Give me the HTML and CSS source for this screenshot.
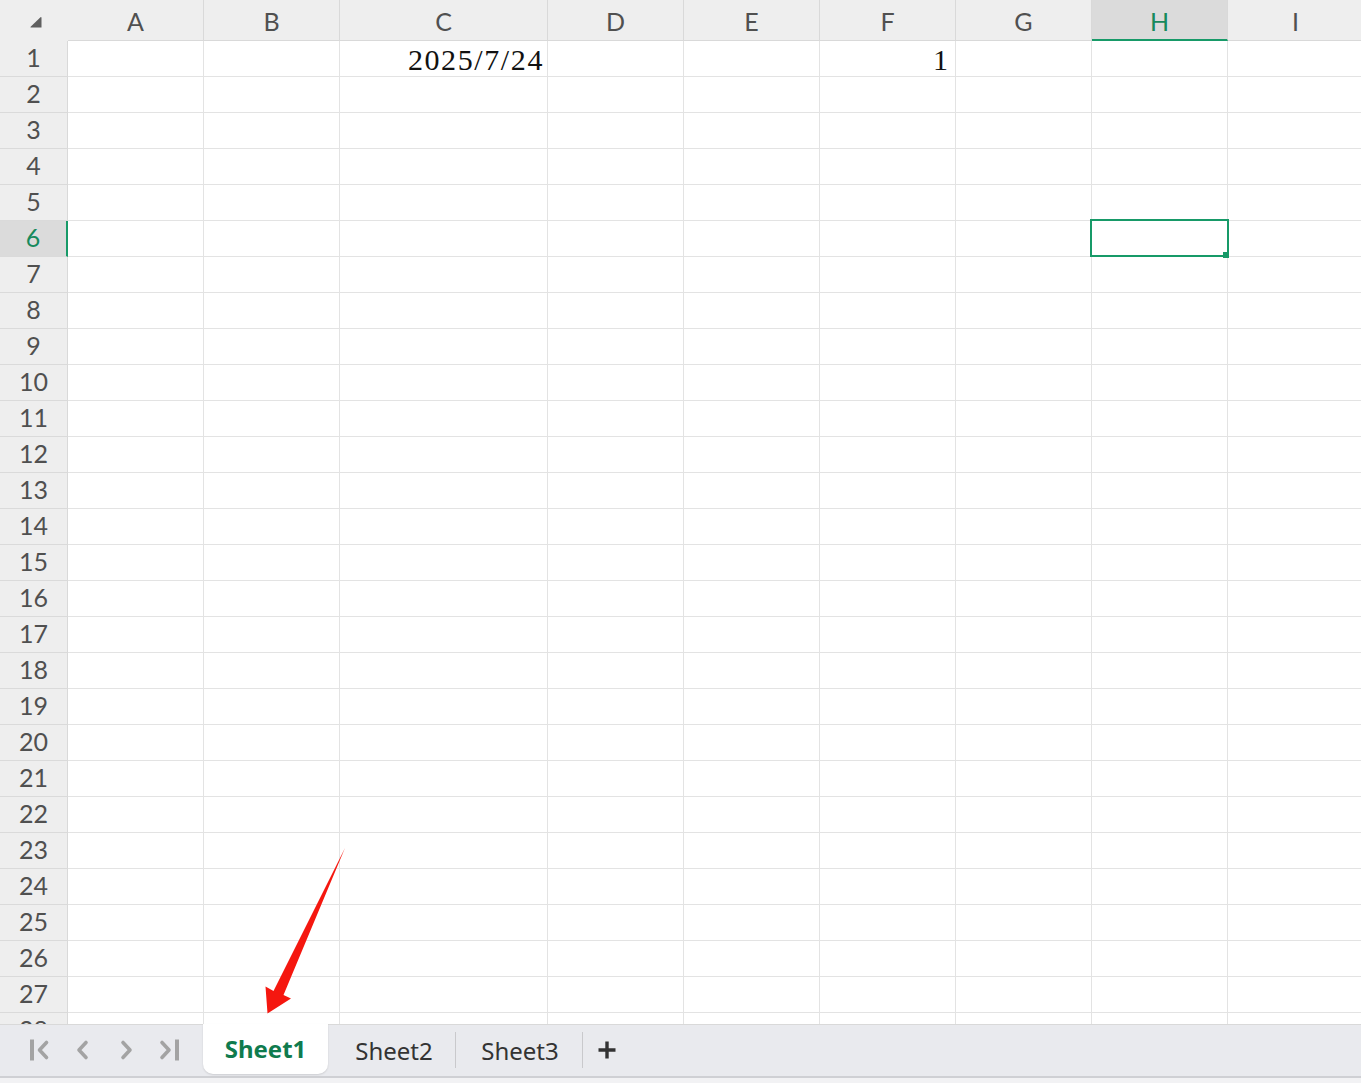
FILE: index.html
```html
<!DOCTYPE html>
<html>
<head>
<meta charset="utf-8">
<link rel="stylesheet" href="styles.css">
</head>
<body>
<div class="app">
  <div class="sheet">
    <div class="row head">
      <div class="corner"><svg width="68" height="40" viewBox="0 0 68 40"><path d="M40.5 17.2 Q41.5 16.8 41.5 18 L41.5 27.5 L31 27.5 Q29.8 27.5 30.6 26.7 Z" fill="#5f5f5f"/></svg></div>
      <div class="ch">A</div><div class="ch">B</div><div class="ch">C</div><div class="ch">D</div><div class="ch">E</div><div class="ch">F</div><div class="ch">G</div><div class="ch on">H</div><div class="ch">I</div>
    </div>
    <div class="row"><div class="rh">1</div><div class="c"></div><div class="c"></div><div class="c v date">2025/7/24</div><div class="c"></div><div class="c"></div><div class="c v num">1</div><div class="c"></div><div class="c"></div><div class="c"></div></div>
    <div class="row"><div class="rh">2</div><div class="c"></div><div class="c"></div><div class="c"></div><div class="c"></div><div class="c"></div><div class="c"></div><div class="c"></div><div class="c"></div><div class="c"></div></div>
    <div class="row"><div class="rh">3</div><div class="c"></div><div class="c"></div><div class="c"></div><div class="c"></div><div class="c"></div><div class="c"></div><div class="c"></div><div class="c"></div><div class="c"></div></div>
    <div class="row"><div class="rh">4</div><div class="c"></div><div class="c"></div><div class="c"></div><div class="c"></div><div class="c"></div><div class="c"></div><div class="c"></div><div class="c"></div><div class="c"></div></div>
    <div class="row"><div class="rh">5</div><div class="c"></div><div class="c"></div><div class="c"></div><div class="c"></div><div class="c"></div><div class="c"></div><div class="c"></div><div class="c"></div><div class="c"></div></div>
    <div class="row"><div class="rh on">6</div><div class="c"></div><div class="c"></div><div class="c"></div><div class="c"></div><div class="c"></div><div class="c"></div><div class="c"></div><div class="c sel"></div><div class="c"></div></div>
    <div class="row"><div class="rh">7</div><div class="c"></div><div class="c"></div><div class="c"></div><div class="c"></div><div class="c"></div><div class="c"></div><div class="c"></div><div class="c"></div><div class="c"></div></div>
    <div class="row"><div class="rh">8</div><div class="c"></div><div class="c"></div><div class="c"></div><div class="c"></div><div class="c"></div><div class="c"></div><div class="c"></div><div class="c"></div><div class="c"></div></div>
    <div class="row"><div class="rh">9</div><div class="c"></div><div class="c"></div><div class="c"></div><div class="c"></div><div class="c"></div><div class="c"></div><div class="c"></div><div class="c"></div><div class="c"></div></div>
    <div class="row"><div class="rh">10</div><div class="c"></div><div class="c"></div><div class="c"></div><div class="c"></div><div class="c"></div><div class="c"></div><div class="c"></div><div class="c"></div><div class="c"></div></div>
    <div class="row"><div class="rh">11</div><div class="c"></div><div class="c"></div><div class="c"></div><div class="c"></div><div class="c"></div><div class="c"></div><div class="c"></div><div class="c"></div><div class="c"></div></div>
    <div class="row"><div class="rh">12</div><div class="c"></div><div class="c"></div><div class="c"></div><div class="c"></div><div class="c"></div><div class="c"></div><div class="c"></div><div class="c"></div><div class="c"></div></div>
    <div class="row"><div class="rh">13</div><div class="c"></div><div class="c"></div><div class="c"></div><div class="c"></div><div class="c"></div><div class="c"></div><div class="c"></div><div class="c"></div><div class="c"></div></div>
    <div class="row"><div class="rh">14</div><div class="c"></div><div class="c"></div><div class="c"></div><div class="c"></div><div class="c"></div><div class="c"></div><div class="c"></div><div class="c"></div><div class="c"></div></div>
    <div class="row"><div class="rh">15</div><div class="c"></div><div class="c"></div><div class="c"></div><div class="c"></div><div class="c"></div><div class="c"></div><div class="c"></div><div class="c"></div><div class="c"></div></div>
    <div class="row"><div class="rh">16</div><div class="c"></div><div class="c"></div><div class="c"></div><div class="c"></div><div class="c"></div><div class="c"></div><div class="c"></div><div class="c"></div><div class="c"></div></div>
    <div class="row"><div class="rh">17</div><div class="c"></div><div class="c"></div><div class="c"></div><div class="c"></div><div class="c"></div><div class="c"></div><div class="c"></div><div class="c"></div><div class="c"></div></div>
    <div class="row"><div class="rh">18</div><div class="c"></div><div class="c"></div><div class="c"></div><div class="c"></div><div class="c"></div><div class="c"></div><div class="c"></div><div class="c"></div><div class="c"></div></div>
    <div class="row"><div class="rh">19</div><div class="c"></div><div class="c"></div><div class="c"></div><div class="c"></div><div class="c"></div><div class="c"></div><div class="c"></div><div class="c"></div><div class="c"></div></div>
    <div class="row"><div class="rh">20</div><div class="c"></div><div class="c"></div><div class="c"></div><div class="c"></div><div class="c"></div><div class="c"></div><div class="c"></div><div class="c"></div><div class="c"></div></div>
    <div class="row"><div class="rh">21</div><div class="c"></div><div class="c"></div><div class="c"></div><div class="c"></div><div class="c"></div><div class="c"></div><div class="c"></div><div class="c"></div><div class="c"></div></div>
    <div class="row"><div class="rh">22</div><div class="c"></div><div class="c"></div><div class="c"></div><div class="c"></div><div class="c"></div><div class="c"></div><div class="c"></div><div class="c"></div><div class="c"></div></div>
    <div class="row"><div class="rh">23</div><div class="c"></div><div class="c"></div><div class="c"></div><div class="c"></div><div class="c"></div><div class="c"></div><div class="c"></div><div class="c"></div><div class="c"></div></div>
    <div class="row"><div class="rh">24</div><div class="c"></div><div class="c"></div><div class="c"></div><div class="c"></div><div class="c"></div><div class="c"></div><div class="c"></div><div class="c"></div><div class="c"></div></div>
    <div class="row"><div class="rh">25</div><div class="c"></div><div class="c"></div><div class="c"></div><div class="c"></div><div class="c"></div><div class="c"></div><div class="c"></div><div class="c"></div><div class="c"></div></div>
    <div class="row"><div class="rh">26</div><div class="c"></div><div class="c"></div><div class="c"></div><div class="c"></div><div class="c"></div><div class="c"></div><div class="c"></div><div class="c"></div><div class="c"></div></div>
    <div class="row"><div class="rh">27</div><div class="c"></div><div class="c"></div><div class="c"></div><div class="c"></div><div class="c"></div><div class="c"></div><div class="c"></div><div class="c"></div><div class="c"></div></div>
    <div class="row"><div class="rh">28</div><div class="c"></div><div class="c"></div><div class="c"></div><div class="c"></div><div class="c"></div><div class="c"></div><div class="c"></div><div class="c"></div><div class="c"></div></div>
  </div>
  <div class="tabbar">
    <svg class="nav" width="203" height="51" viewBox="0 0 203 51">
      <g fill="none" stroke="#a3a3a3" stroke-width="3.6" stroke-linecap="round" stroke-linejoin="round">
        <polyline points="46.5,17.5 39.5,25 46.5,32.5"/>
        <polyline points="86,17.5 79,25 86,32.5"/>
        <polyline points="123,17.5 130,25 123,32.5"/>
        <polyline points="162,17.5 169,25 162,32.5"/>
      </g>
      <rect x="30" y="14.5" width="4" height="21" fill="#a3a3a3"/>
      <rect x="175" y="14.5" width="4" height="21" fill="#a3a3a3"/>
    </svg>
    <div class="tab active">Sheet1</div>
    <div class="tab t2">Sheet2</div>
    <div class="sep"></div>
    <div class="tab t3">Sheet3</div>
    <div class="sep"></div>
    <div class="plus"><svg width="20" height="20" viewBox="0 0 20 20"><path d="M10 1.5 V18.5 M1.5 10 H18.5" stroke="#333" stroke-width="3.4"/></svg></div>
  </div>
  <div class="status"></div>
  <svg class="arrow" width="1361" height="1083" viewBox="0 0 1361 1083">
    <polygon points="345,848 283.5,995 291,998.5 267.5,1013.5 265.5,986.5 273.5,991" fill="#f5170f"/>
  </svg>
</div>
</body>
</html>
```
FILE: styles.css
```css
html, body {
  margin: 0;
  padding: 0;
  background: #ffffff;
  overflow: hidden;
}
.app {
  position: relative;
  width: 1361px;
  height: 1083px;
  overflow: hidden;
  font-family: Lato, "Open Sans", sans-serif;
}
.sheet {
  height: 1024px;
  overflow: hidden;
  background: #ffffff;
}
.row {
  display: grid;
  grid-template-columns: 68px 136px 136px 208px 136px 136px 136px 136px 136px 136px;
  height: 36px;
}
.row.head {
  height: 41px;
}
.corner {
  background: #eeeeee;
  border-bottom: 1px solid #eeeeee;
  height: 41px;
  box-sizing: border-box;
}
.corner svg {
  display: block;
}
.ch {
  background: #eeeeee;
  border-right: 1px solid #d9d9d9;
  border-bottom: 1px solid #d9d9d9;
  box-sizing: border-box;
  height: 41px;
  text-align: center;
  font-size: 25px;
  line-height: 38px;
  padding-top: 2px;
  color: #505050;
}
.ch.on {
  background: #dbdbdb;
  color: #178a5d;
  border-bottom: 2px solid #179a68;
}
.rh {
  background: #eeeeee;
  border-right: 1px solid #d9d9d9;
  border-bottom: 1px solid #dadada;
  box-sizing: border-box;
  text-align: center;
  font-size: 25px;
  line-height: 32px;
  color: #505050;
  overflow: hidden;
}
.rh.on {
  background: #dbdbdb;
  color: #178a5d;
  border-right: 2px solid #179a68;
}
.c {
  border-right: 1px solid #e3e3e3;
  border-bottom: 1px solid #e3e3e3;
  box-sizing: border-box;
}
.c.v {
  font-family: "Liberation Serif", "Times New Roman", serif;
  font-size: 30px;
  line-height: 33px;
  padding-top: 2px;
  text-align: right;
  color: #111;
  white-space: nowrap;
}
.c.date {
  letter-spacing: 1.6px;
  padding-right: 3px;
}
.c.num {
  padding-right: 7px;
}
.c.sel {
  position: relative;
}
.c.sel::after {
  content: "";
  position: absolute;
  left: -2px;
  top: -2px;
  right: -2px;
  bottom: -1px;
  border: 2px solid #179a68;
  z-index: 3;
}
.c.sel::before {
  content: "";
  position: absolute;
  right: -2px;
  bottom: -2px;
  width: 6px;
  height: 6px;
  background: #179a68;
  z-index: 4;
}
.tabbar {
  display: flex;
  align-items: flex-start;
  height: 52px;
  box-sizing: border-box;
  background: #e9eaee;
  border-top: 1px solid #d9d9d9;
  font-family: "Noto Sans", "Open Sans", sans-serif;
}
.nav {
  display: block;
  flex: none;
}
.tab {
  flex: none;
  height: 51px;
  line-height: 51px;
  font-size: 24px;
  color: #333333;
  text-align: center;
  box-sizing: border-box;
}
.tab.active {
  width: 125px;
  height: 50px;
  margin-top: -1px;
  line-height: 49px;
  background: #ffffff;
  border-radius: 0 0 10px 10px;
  box-shadow: 0 1px 2px rgba(0,0,0,0.12);
  color: #0f7b4e;
  font-weight: 700;
}
.tab.t2 {
  width: 127px;
  padding-left: 5px;
}
.tab.t3 {
  width: 126px;
  padding-left: 2px;
}
.sep {
  flex: none;
  width: 1px;
  height: 36px;
  margin-top: 7px;
  background: #c9c9cc;
}
.plus {
  flex: none;
  margin-left: 14px;
  margin-top: 15px;
}
.plus svg {
  display: block;
}
.status {
  height: 7px;
  box-sizing: border-box;
  border-top: 2px solid #cfd0d4;
  background: #f2f2f4;
}
.arrow {
  position: absolute;
  left: 0;
  top: 0;
  pointer-events: none;
}
```
